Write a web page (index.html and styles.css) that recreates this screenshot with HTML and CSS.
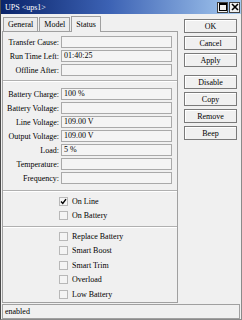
FILE: index.html
```html
<!DOCTYPE html>
<html lang="en">
<head>
    <meta charset="UTF-8">
    <title>UPS &lt;ups1&gt;</title>
    <link rel="stylesheet" href="styles.css">
</head>
<body>
<div class="window">
    <div class="titlebar">
        <span class="title">UPS &lt;ups1&gt;</span>
        <div class="win-btns">
            <span class="win-btn"><svg width="8" height="8" viewBox="0 0 8 8"><rect x="0.5" y="0.5" width="7" height="7" fill="none" stroke="#000"/><line x1="0" y1="1.5" x2="8" y2="1.5" stroke="#000"/></svg></span>
            <span class="win-btn"><svg width="8" height="8" viewBox="0 0 8 8"><path d="M1 1 L7 7 M7 1 L1 7" stroke="#000" stroke-width="1.6"/></svg></span>
        </div>
    </div>

    <div class="main">
        <div class="left">
            <div class="tabs">
                <div class="tab">General</div>
                <div class="tab">Model</div>
                <div class="tab active">Status</div>
            </div>
            <div class="panel">
                <div class="row"><label>Transfer Cause:</label><div class="field"></div></div>
                <div class="row"><label>Run Time Left:</label><div class="field">01:40:25</div></div>
                <div class="row"><label>Offline After:</label><div class="field"></div></div>
                <div class="sep"></div>
                <div class="row"><label>Battery Charge:</label><div class="field">100 %</div></div>
                <div class="row"><label>Battery Voltage:</label><div class="field"></div></div>
                <div class="row"><label>Line Voltage:</label><div class="field">109.00 V</div></div>
                <div class="row"><label>Output Voltage:</label><div class="field">109.00 V</div></div>
                <div class="row"><label>Load:</label><div class="field">5 %</div></div>
                <div class="row"><label>Temperature:</label><div class="field"></div></div>
                <div class="row"><label>Frequency:</label><div class="field"></div></div>
                <div class="sep sep-low"></div>
                <div class="check"><span class="box checked"><svg width="7" height="7" viewBox="0 0 7 7"><path d="M1 3.5 L2.8 5.5 L6 1.2" fill="none" stroke="#000" stroke-width="1.4"/></svg></span>On Line</div>
                <div class="check"><span class="box"></span>On Battery</div>
                <div class="sep sep-check"></div>
                <div class="check"><span class="box"></span>Replace Battery</div>
                <div class="check"><span class="box"></span>Smart Boost</div>
                <div class="check"><span class="box"></span>Smart Trim</div>
                <div class="check"><span class="box"></span>Overload</div>
                <div class="check"><span class="box"></span>Low Battery</div>
            </div>
        </div>

        <div class="buttons">
            <button type="button">OK</button>
            <button type="button">Cancel</button>
            <button type="button">Apply</button>
            <button type="button" class="gap">Disable</button>
            <button type="button">Copy</button>
            <button type="button">Remove</button>
            <button type="button">Beep</button>
        </div>
    </div>

    <div class="statusbar">
        <div class="status">enabled</div>
    </div>
</div>
</body>
</html>
```
FILE: styles.css
```css
body{
    margin: 0;
    width: 242px;
    height: 320px;
    background-color: #f0f0f0;
    font-family: "Liberation Serif", serif;
    font-size: 8px;
    color: #000;
    overflow: hidden;
}
.window{
    box-sizing: border-box;
    height: 320px;
    display: flex;
    flex-direction: column;
    border-left: 1px solid #4a4a4a;
    border-right: 1px solid #8a8a8a;
    border-bottom: 1px solid #8a8a8a;
}
.titlebar{
    height: 14px;
    flex: none;
    display: flex;
    align-items: center;
    justify-content: space-between;
    background: linear-gradient(to right, #0a246a, #3c62b4 45%, #a6caf0);
    color: #fff;
    padding-left: 4px;
}
.win-btns{
    display: flex;
    gap: 1px;
    margin-right: 1px;
}
.win-btn{
    box-sizing: border-box;
    width: 11px;
    height: 11px;
    background-color: #f0f0f0;
    border: 1px solid #404040;
    display: flex;
    align-items: center;
    justify-content: center;
}
.main{
    flex: 1;
    display: flex;
    padding-left: 1px;
}
.left{
    width: 176px;
    display: flex;
    flex-direction: column;
}
.tabs{
    height: 17px;
    display: flex;
    align-items: flex-end;
    padding-left: 1px;
}
.tab{
    box-sizing: border-box;
    height: 14px;
    padding: 0 4px;
    line-height: 13px;
    border: 1px solid #a0a0a0;
    border-bottom: 0;
    margin-right: 1px;
    background-color: #ececec;
}
.tab.active{
    height: 16px;
    line-height: 15px;
    background-color: #f0f0f0;
    margin-bottom: -1px;
    position: relative;
    z-index: 1;
}
.panel{
    flex: 1;
    border: 1px solid #a0a0a0;
    padding-top: 4px;
    display: flex;
    flex-direction: column;
}
.row{
    display: flex;
    align-items: center;
    height: 12px;
    margin-bottom: 2px;
}
.row label{
    width: 56px;
    text-align: right;
    padding-right: 2px;
    white-space: nowrap;
}
.field{
    box-sizing: border-box;
    width: 111px;
    height: 12px;
    line-height: 10px;
    border: 1px solid #a9a9a9;
    background-color: #f4f4f4;
    padding-left: 2px;
}
.sep{
    height: 0;
    border-top: 1px solid #b0b0b0;
    border-bottom: 1px solid #fff;
    margin: 2px 0 6px;
}
.sep-low{
    margin: 4px 0 2px;
}
.sep-check{
    margin: 3px 0 1px;
}
.check{
    display: flex;
    align-items: center;
    height: 14.5px;
    padding-left: 56px;
}
.box{
    box-sizing: border-box;
    width: 9px;
    height: 9px;
    border: 1px solid #b8b8b8;
    background-color: #f4f4f4;
    margin-right: 4px;
    display: flex;
    align-items: center;
    justify-content: center;
}
.buttons{
    display: flex;
    flex-direction: column;
    padding-top: 5px;
    margin-left: 6px;
}
button{
    box-sizing: border-box;
    width: 53px;
    height: 14px;
    margin-bottom: 3px;
    padding: 0;
    font-family: "Liberation Serif", serif;
    font-size: 8px;
    color: #000;
    background-color: #f0f0f0;
    border: 1px solid #7a7a7a;
    box-shadow: inset 1px 1px 0 #fff;
}
button.gap{
    margin-top: 5px;
}
.statusbar{
    height: 16px;
    flex: none;
    padding: 1px 1px 0;
}
.status{
    box-sizing: border-box;
    height: 15px;
    line-height: 13px;
    border: 1px solid #a0a0a0;
    padding-left: 2px;
}
```
